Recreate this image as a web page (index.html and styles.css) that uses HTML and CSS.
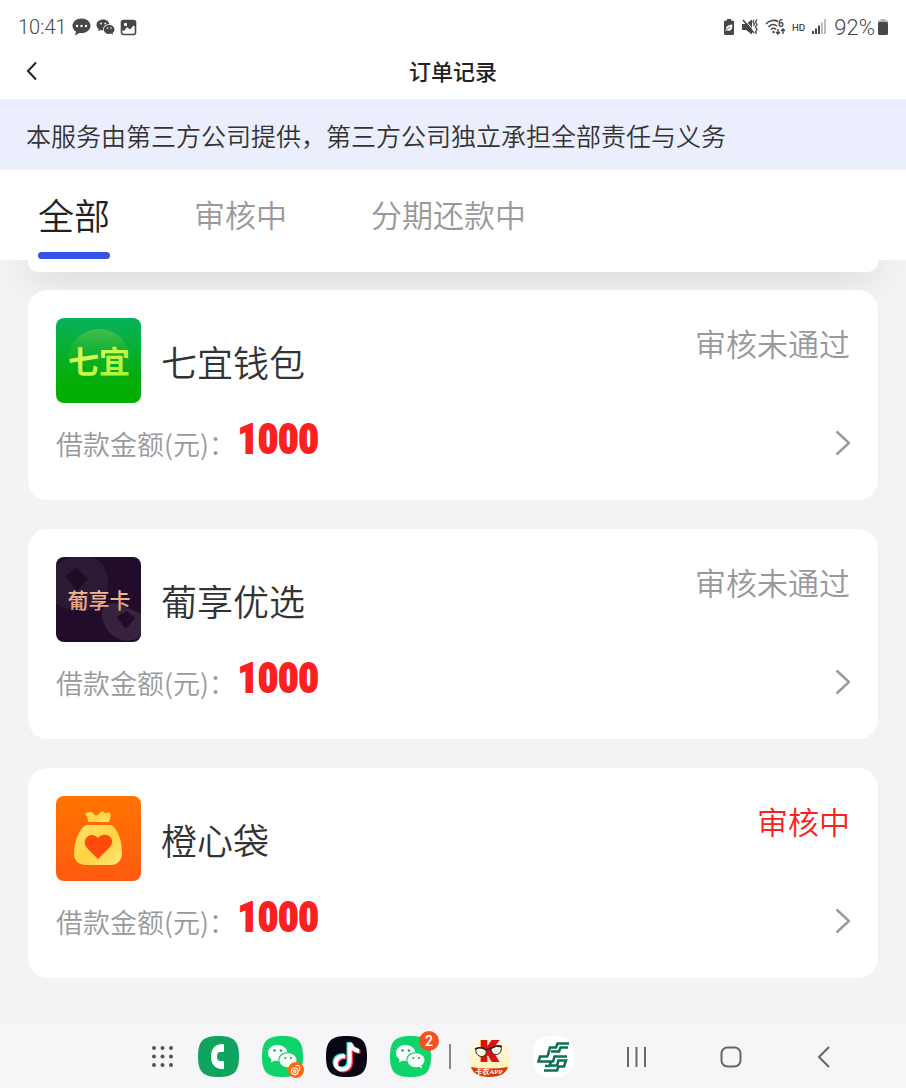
FILE: index.html
```html
<!DOCTYPE html>
<html lang="zh-CN">
<head>
  <meta charset="UTF-8">
  <meta name="viewport" content="width=device-width, initial-scale=1.0">
  <title>订单记录</title>
  <link rel="stylesheet" href="styles.css">
</head>
<body>

  <header class="top">
    <div class="status-bar">
      <div class="status-left">
        <span class="clock">10:41</span>
        <svg width="19" height="18" viewBox="0 0 19 18">
          <path fill="#474747" d="M9.500 .5C4.500 .5.5 3.700.5 7.800c0 2.500 1.300 4.500 3.500 5.800L3 17.500l4.300-2.600c.7.200 1.500.2 2.200.2 5 0 9-3.200 9-7.300S14.500.5 9.500.5z"/>
          <g fill="#fff"><circle cx="5" cy="8" r="1.200"/><circle cx="9.500" cy="8" r="1.200"/><circle cx="14" cy="8" r="1.200"/></g>
        </svg>
        <svg width="19" height="18" viewBox="0 0 19 18">
          <path fill="#474747" d="M7 1.500C3.300 1.500.5 3.800.5 7c0 1.700.8 3 2.200 4l-.6 2.300 2.500-1.300c.9.300 1.700.4 2.600.4-.5-4 2.500-6.300 6.300-6.100C13 3.200 10.200 1.500 7 1.500z"/>
          <path fill="#474747" d="M13.200 6.900c-3 0-5.400 1.900-5.400 4.500s2.400 4.500 5.400 4.500c.6 0 1.300-.1 1.900-.3l2 1.100-.5-1.900c1.200-.8 1.900-2 1.900-3.400 0-2.600-2.300-4.500-5.300-4.500z"/>
          <g fill="#fff"><circle cx="5" cy="5.500" r=".9"/><circle cx="9.300" cy="5.500" r=".9"/><circle cx="11.500" cy="10" r=".8"/><circle cx="15" cy="10" r=".8"/></g>
        </svg>
        <svg width="17" height="17" viewBox="0 0 17 17">
          <rect x="1.500" y="1.500" width="14" height="14" rx="2" fill="none" stroke="#474747" stroke-width="1.600"/>
          <path fill="#474747" d="M1.500 2h14v6l-2-1.500-3.500 4-3-2.500-3 4-2.500-1z"/>
          <rect x="4" y="4" width="3" height="3" rx="1" fill="#fff"/>
        </svg>
      </div>
      <div class="status-right">
        <svg width="12" height="18" viewBox="0 0 12 18">
          <path fill="#474747" d="M4 1h4v1.500h1.500A1.500 1.500 0 0 1 11 4v11.500A1.500 1.500 0 0 1 9.500 17h-7A1.500 1.500 0 0 1 1 15.500V4a1.500 1.500 0 0 1 1.500-1.500H4z"/>
          <path fill="#fff" d="M9.300 6.500c.3 4-.8 6.300-3.800 6.300-.8 0-1.300-.2-1.700-.5l-.9.900-.6-.6 1-1C2.500 8.500 5 7 9.300 6.500z"/>
          <path stroke="#474747" stroke-width=".8" fill="none" d="M3.500 11.800 7 8.800"/>
        </svg>
        <svg width="16" height="18" viewBox="0 0 16 18">
          <path fill="#474747" d="M0 6h4l6-4.500v15L4 12H0z"/>
          <path stroke="#fff" stroke-width="1" d="M2.500 1.500l11 13"/>
          <path stroke="#474747" stroke-width="1.600" d="M1 2l11 13"/>
          <path stroke="#474747" stroke-width="1.300" fill="none" d="M12 2l-1 2 1.500 2-1 2M15 1.500l-1.500 2.500L15 6.500 13.500 9l1.500 2.500-1.500 2.500 1 2"/>
        </svg>
        <svg width="20" height="18" viewBox="0 0 20 18">
          <g fill="none" stroke="#474747" stroke-width="1.600">
            <path d="M1 6c3.500-4 8.500-4.500 12-2.500M3.500 9c2.500-3 6-3 8.500-1M6 11.500c1.500-1.600 3.500-1.600 5 0"/>
            <path stroke-width="1.400" d="M13 11v5M11 14l2 2 2-2M18 16v-5M16 13l2-2 2 2"/>
          </g>
          <circle cx="8.500" cy="14" r="1.200" fill="#474747"/>
          <text class="wifi-six" x="13" y="9">6</text>
        </svg>
        <span class="hd">HD</span>
        <svg width="15" height="16" viewBox="0 0 15 16">
          <g fill="#474747"><rect x="0" y="12" width="2" height="3"/><rect x="3" y="9.500" width="2" height="5.500"/><rect x="6" y="6.500" width="2" height="8.500"/></g>
          <g fill="#bdbdbd"><rect x="9" y="3.500" width="2" height="11.500"/><rect x="12" y="0" width="2" height="15"/></g>
        </svg>
        <span class="battery-text">92%</span>
        <svg width="12" height="16" viewBox="0 0 12 16">
          <path fill="#b5b5b5" d="M3.500 0h5v1.500H11V4H1V1.500h2.500z"/>
          <rect x="1" y="3" width="10" height="13" rx="1.500" fill="#474747"/>
        </svg>
      </div>
    </div>

    <div class="title-bar">
      <button class="back" type="button" aria-label="返回">
        <svg width="12" height="20" viewBox="0 0 12 20"><path d="M10 1.500 2 10l8 8.500" fill="none" stroke="#222" stroke-width="2"/></svg>
      </button>
      <h1>订单记录</h1>
    </div>

    <p class="notice">本服务由第三方公司提供，第三方公司独立承担全部责任与义务</p>

    <nav class="tabs">
      <button class="tab active" type="button">全部</button>
      <button class="tab" type="button">审核中</button>
      <button class="tab" type="button">分期还款中</button>
    </nav>
  </header>

  <main class="orders">
    <div class="scrolled-card"></div>

    <article class="card">
      <div class="card-head">
        <svg class="logo" viewBox="0 0 85 85">
          <defs>
            <linearGradient id="green" x1="0" y1="0" x2="0" y2="1"><stop offset="0" stop-color="#07b25c"/><stop offset=".75" stop-color="#04ad08"/><stop offset="1" stop-color="#02ad00"/></linearGradient>
            <linearGradient id="shine" x1="0" y1="0" x2="0" y2="1"><stop offset="0" stop-color="#46bd50"/><stop offset=".7" stop-color="#08ad18" stop-opacity="0"/></linearGradient>
            <linearGradient id="lime" x1="0" y1="0" x2="1" y2="1"><stop offset="0" stop-color="#f5ff68"/><stop offset="1" stop-color="#a5f22b"/></linearGradient>
          </defs>
          <rect width="85" height="85" fill="url(#green)"/>
          <circle cx="43" cy="42" r="31" fill="url(#shine)"/>
          <text class="logo-qiyi" x="43" y="55">七宜</text>
        </svg>
        <h2>七宜钱包</h2>
        <span class="state">审核未通过</span>
      </div>
      <div class="card-foot">
        <span class="label">借款金额(元)：</span>
        <strong class="amount">1000</strong>
        <a class="more" href="#" aria-label="查看详情"><svg width="16" height="26" viewBox="0 0 16 26"><path d="M2.500 1.500 15 13 2.500 24.500" fill="none" stroke="#999" stroke-width="2.400"/></svg></a>
      </div>
    </article>

    <article class="card">
      <div class="card-head">
        <svg class="logo" viewBox="0 0 85 85">
          <defs><linearGradient id="gold" x1="0" y1="0" x2="0" y2="1"><stop offset="0" stop-color="#f8c49b"/><stop offset="1" stop-color="#e19d7c"/></linearGradient></defs>
          <rect width="85" height="85" fill="#210d2b"/>
          <path fill="#2c1935" d="M0 9C8 1 17-3 28-2c14 1 24 12 24 27 0 17-10 29-26 29-11 0-20-3-26-8z"/>
          <path fill="#200b25" d="M9 19 20 11l12 11-11 12z"/>
          <path fill="#38233e" d="M46 54c3-8 12-10 22-5l17 8v22c-7 6-18 6-26 1-9-6-14-16-13-26z"/>
          <path fill="#210d2b" d="M60 60 71 54l8 7-9 11z"/>
          <text class="logo-puxiang" x="43" y="51">葡享卡</text>
        </svg>
        <h2>葡享优选</h2>
        <span class="state">审核未通过</span>
      </div>
      <div class="card-foot">
        <span class="label">借款金额(元)：</span>
        <strong class="amount">1000</strong>
        <a class="more" href="#" aria-label="查看详情"><svg width="16" height="26" viewBox="0 0 16 26"><path d="M2.500 1.500 15 13 2.500 24.500" fill="none" stroke="#999" stroke-width="2.400"/></svg></a>
      </div>
    </article>

    <article class="card">
      <div class="card-head">
        <svg class="logo" viewBox="0 0 85 85">
          <defs>
            <linearGradient id="orange" x1="0" y1="0" x2="0" y2="1"><stop offset="0" stop-color="#ff7500"/><stop offset="1" stop-color="#ff5a10"/></linearGradient>
            <linearGradient id="bag" x1="0" y1="0" x2="1" y2="1"><stop offset="0" stop-color="#ffe36a"/><stop offset=".55" stop-color="#ffd342"/><stop offset="1" stop-color="#ffe97c"/></linearGradient>
          </defs>
          <rect width="85" height="85" fill="url(#orange)"/>
          <path fill="url(#bag)" d="M32 26c0-4-1-6-3-8 3-2 6-3 8-1 2 3 4 3 6 1 2-3 4-3 6-1 2 0 3-1 5 0 2 4-1 6-1 9z"/>
          <path fill="url(#bag)" d="M30 29h25c7 4 11 16 11 27 0 8-4 13-11 13H30c-7 0-12-4-12-11 0-12 5-25 12-29z"/>
          <path fill="#ff4b09" d="M42 63 31 52c-7-9 4-18 11-10 7-8 19 0 12 9z"/>
        </svg>
        <h2>橙心袋</h2>
        <span class="state pending">审核中</span>
      </div>
      <div class="card-foot">
        <span class="label">借款金额(元)：</span>
        <strong class="amount">1000</strong>
        <a class="more" href="#" aria-label="查看详情"><svg width="16" height="26" viewBox="0 0 16 26"><path d="M2.500 1.500 15 13 2.500 24.500" fill="none" stroke="#999" stroke-width="2.400"/></svg></a>
      </div>
    </article>
  </main>

  <footer class="dock">
    <button class="all-apps" type="button" aria-label="应用">
      <svg width="25" height="25" viewBox="0 0 25 25">
        <g fill="#555"><circle cx="4" cy="4" r="2"/><circle cx="12.500" cy="4" r="2"/><circle cx="21" cy="4" r="2"/><circle cx="4" cy="12.500" r="2"/><circle cx="12.500" cy="12.500" r="2"/><circle cx="21" cy="12.500" r="2"/><circle cx="4" cy="21" r="2"/><circle cx="12.500" cy="21" r="2"/><circle cx="21" cy="21" r="2"/></g>
      </svg>
    </button>
    <button class="app" type="button" aria-label="电话">
      <svg width="41" height="41" viewBox="0 0 41 41">
        <path fill="#11a461" d="M20.500 0C36 0 41 5 41 20.500S36 41 20.500 41 0 36 0 20.500 5 0 20.500 0z"/>
        <path fill="#fff" d="M24 8h1q1 0 1 1v6q0 1-1 1h-2.500c-2.500 0-3.500 2-3.500 4.500s1 4.500 3.500 4.500H25q1 0 1 1v6q0 1-1 1h-1c-7 0-11-5-11-12.500S17 8 24 8z"/>
      </svg>
    </button>
    <button class="app" type="button" aria-label="微信分身">
      <svg width="41" height="41" viewBox="0 0 41 41">
        <path fill="#0ed469" d="M20.500 0C36 0 41 5 41 20.500S36 41 20.500 41 0 36 0 20.500 5 0 20.500 0z"/>
        <path fill="#fff" d="M15.500 9C10 9 6 12.500 6 17c0 2.700 1.400 4.800 3.600 6.300L9 26.500l3.500-2c1.300.4 2.500.5 4 .5-1-5 3.500-9 9-8.700C24.600 12 20.500 9 15.500 9z"/>
        <path fill="#fff" d="M26 17.200c-4.800 0-8.500 3-8.500 7s3.700 7 8.500 7c1 0 2-.2 3-.5l3 1.700-.8-2.800c2-1.300 3.300-3.200 3.300-5.400 0-4-3.700-7-8.500-7z"/>
        <g fill="#0aa757"><circle cx="12.500" cy="14.500" r="1.300"/><circle cx="19" cy="14.500" r="1.300"/><circle cx="23.300" cy="22" r="1.100"/><circle cx="29" cy="22" r="1.100"/></g>
      </svg>
      <svg class="clone" width="16" height="16" viewBox="0 0 16 16">
        <circle cx="8" cy="8" r="8" fill="#ff6b0b"/>
        <g fill="none" stroke="#fff" stroke-width="1.100"><circle cx="6.800" cy="9.300" r="3.300"/><circle cx="6.800" cy="9.300" r="1.200"/><path d="M7.500 4c3-1.500 5.500 1 4 4.500"/></g>
      </svg>
    </button>
    <button class="app" type="button" aria-label="抖音">
      <svg width="41" height="41" viewBox="0 0 41 41">
        <path fill="#090713" d="M20.500 0C36 0 41 5 41 20.500S36 41 20.500 41 0 36 0 20.500 5 0 20.500 0z"/>
        <g fill="none" stroke-width="4">
          <path stroke="#35e6e6" d="M22.500 6v19c0 10-14 9.500-14 1.500 0-5 4.500-8 9.500-7M23 6c1 5 4 7.500 9 8"/>
          <path stroke="#fa2c59" d="M25 8v19c0 10-14 9.500-14 1.500 0-5 4.500-8 9.500-7M25.500 8c1 5 4 7.500 9 8"/>
          <path stroke="#fff" d="M23.700 7v19c0 10-14 9.500-14 1.500 0-5 4.500-8 9.500-7M24.200 7c1 5 4 7.500 9 8"/>
        </g>
      </svg>
    </button>
    <button class="app" type="button" aria-label="微信">
      <svg width="41" height="41" viewBox="0 0 41 41">
        <path fill="#0ed469" d="M20.500 0C36 0 41 5 41 20.500S36 41 20.500 41 0 36 0 20.500 5 0 20.500 0z"/>
        <path fill="#fff" d="M15.500 9C10 9 6 12.500 6 17c0 2.700 1.400 4.800 3.600 6.300L9 26.500l3.500-2c1.300.4 2.500.5 4 .5-1-5 3.500-9 9-8.700C24.600 12 20.500 9 15.500 9z"/>
        <path fill="#fff" d="M26 17.200c-4.800 0-8.500 3-8.500 7s3.700 7 8.500 7c1 0 2-.2 3-.5l3 1.700-.8-2.800c2-1.300 3.300-3.200 3.300-5.400 0-4-3.700-7-8.500-7z"/>
        <g fill="#0aa757"><circle cx="12.500" cy="14.500" r="1.300"/><circle cx="19" cy="14.500" r="1.300"/><circle cx="23.300" cy="22" r="1.100"/><circle cx="29" cy="22" r="1.100"/></g>
      </svg>
      <span class="badge">2</span>
    </button>
    <span class="divider"></span>
    <button class="app" type="button" aria-label="卡农">
      <svg width="41" height="41" viewBox="0 0 41 41">
        <defs><clipPath id="round"><path d="M20.500 0C36 0 41 5 41 20.500S36 41 20.500 41 0 36 0 20.500 5 0 20.500 0z"/></clipPath>
        <linearGradient id="cream" x1="0" y1="0" x2="0" y2="1"><stop offset="0" stop-color="#fbf8f3"/><stop offset="1" stop-color="#fff3a8"/></linearGradient></defs>
        <g clip-path="url(#round)">
          <rect width="41" height="41" fill="url(#cream)"/>
          <path fill="#d8360f" d="M2 31q18.500 3 37 0-3 10-18.500 10T2 31z"/>
        </g>
        <text class="logo-k" x="20" y="25">K</text>
        <g fill="#fffce0" stroke="#222">
          <path d="M7 13q5-3 10 .5c1 4-1 7-4.500 7S6 17 7 13z"/>
          <path d="M22 12q6-3 10-1c1 4-1 7-4.500 7.500S22 16 22 12z"/>
        </g>
        <path d="M6 13q6-3 11 1 3-2 5-1.500 6-4 11-2" fill="none" stroke="#222" stroke-width="1.500"/>
        <text class="logo-kanong" x="20" y="38">卡农APP</text>
      </svg>
    </button>
    <button class="app" type="button" aria-label="邮储银行">
      <svg width="41" height="41" viewBox="0 0 41 41">
        <path fill="#fff" d="M20.500 0C36 0 41 5 41 20.500S36 41 20.500 41 0 36 0 20.500 5 0 20.500 0z"/>
        <g fill="none" stroke="#0c7054" stroke-width="2.600">
          <path d="M36 7.500H24.500L23 11.500h-6L14.500 20.500"/>
          <path d="M35 11.500h-7.500L26 15.500h-8"/>
          <path d="M15 20.500H7L5.500 25.500H20l1.500-5H34"/>
          <path d="M11 34.500h13l1.500-4H31l2-6h-7.500L24 29.500h-6"/>
          <path d="M18 25.500 16.500 30H12"/>
        </g>
      </svg>
    </button>
    <div class="system-nav">
      <button type="button" aria-label="最近任务"><svg width="22" height="22" viewBox="0 0 22 22"><path d="M2 1v20M10.500 1v20M19 1v20" stroke="#666" stroke-width="2"/></svg></button>
      <button type="button" aria-label="主页"><svg width="22" height="22" viewBox="0 0 22 22"><rect x="1.500" y="1.500" width="19" height="19" rx="6" fill="none" stroke="#666" stroke-width="2"/></svg></button>
      <button type="button" aria-label="返回上一页"><svg width="14" height="22" viewBox="0 0 14 22"><path d="M12 1 2 11l10 10" fill="none" stroke="#666" stroke-width="2"/></svg></button>
    </div>
  </footer>

</body>
</html>
```
FILE: styles.css
```css
* {
  box-sizing: border-box;
}
body {
  margin: 0;
  min-height: 100vh;
  display: flex;
  flex-direction: column;
  font-family: "Noto Sans CJK SC", sans-serif;
  font-weight: 350;
  background-color: #f3f3f3;
  color: #333333;
}
h1, h2, p {
  margin: 0;
}
button {
  padding: 0;
  border: none;
  background: none;
  font-family: inherit;
  font-weight: inherit;
  color: inherit;
  cursor: pointer;
}
svg {
  display: block;
}

.top {
  position: relative;
  z-index: 1;
  background-color: #ffffff;
}
.status-bar {
  display: flex;
  justify-content: space-between;
  align-items: center;
  height: 44px;
  padding: 10px 17px 0 18px;
  font-family: Roboto, sans-serif;
  font-size: 20px;
  color: #474747;
}
.status-left, .status-right {
  display: flex;
  align-items: center;
}
.status-left {
  gap: 5px;
}
.status-right {
  gap: 7px;
}
.hd {
  font-family: Inter, sans-serif;
  font-size: 9px;
  font-weight: 600;
}
.wifi-six {
  font-family: Roboto, sans-serif;
  font-size: 10px;
  font-weight: 700;
  fill: #474747;
}
.battery-text {
  margin-right: -5px;
  font-size: 22px;
}

.title-bar {
  display: flex;
  align-items: center;
  height: 55px;
  padding: 0 26px 2px;
}
.title-bar h1 {
  flex: 1;
  padding-right: 12px;
  font-size: 22px;
  font-weight: 500;
  line-height: 53px;
  text-align: center;
  color: #222222;
}

.notice {
  padding: 2px 26px 0;
  font-size: 25px;
  line-height: 69px;
  background-color: #ebeefc;
}

.tabs {
  display: flex;
  gap: 84px;
  height: 90px;
  padding: 0 38px;
}
.tab {
  padding-top: 2px;
  border-bottom: 5px solid transparent;
  font-size: 31px;
  color: #999999;
}
.tab.active {
  position: relative;
  font-size: 36px;
  color: #222222;
}
.tab.active::after {
  content: "";
  position: absolute;
  left: 0;
  right: 0;
  bottom: -4px;
  height: 7px;
  border-radius: 4px;
  background-color: #3551e6;
}

.orders {
  flex: 1;
  padding: 0 28px 28px;
}
.scrolled-card {
  height: 12px;
  margin-bottom: 18px;
  border-radius: 0 0 10px 10px;
  background-color: #ffffff;
  box-shadow: 0 0 36px rgba(0, 0, 0, 0.25);
}
.card {
  padding: 28px 28px 32px;
  margin-bottom: 29px;
  border-radius: 20px;
  background-color: #ffffff;
}
.card:last-child {
  margin-bottom: 0;
}
.card-head {
  display: flex;
  align-items: flex-start;
}
.logo {
  flex: none;
  width: 85px;
  height: 85px;
  margin-right: 20px;
  border-radius: 8px;
}
.logo-qiyi {
  font-size: 31px;
  font-weight: 700;
  text-anchor: middle;
  fill: url(#lime);
}
.logo-puxiang {
  font-size: 21px;
  font-weight: 500;
  text-anchor: middle;
  fill: url(#gold);
}
.card h2 {
  font-size: 36px;
  font-weight: 350;
  line-height: 86px;
  height: 85px;
}
.state {
  margin-left: auto;
  font-size: 31px;
  line-height: 50px;
  color: #999999;
}
.state.pending {
  color: #fc2020;
}
.card-foot {
  display: flex;
  align-items: center;
  height: 50px;
  margin-top: 15px;
}
.label {
  font-size: 27px;
  color: #999999;
}
.amount {
  align-self: flex-start;
  margin-left: 2px;
  font-family: "Liberation Sans Narrow", "Roboto Condensed", Roboto, sans-serif;
  font-size: 40px;
  font-weight: 700;
  line-height: 43px;
  color: #fc2020;
  -webkit-text-stroke: 2px #fc2020;
}
.more {
  margin-left: auto;
}

.dock {
  display: flex;
  align-items: center;
  gap: 23px;
  height: 64px;
  padding: 1px 35px 0 150px;
  background-color: #f6f6f9;
}
.app {
  position: relative;
}
.clone {
  position: absolute;
  right: -1px;
  bottom: -1px;
}
.badge {
  position: absolute;
  top: -5px;
  right: -8px;
  width: 20px;
  height: 20px;
  border-radius: 50%;
  font-family: Roboto, sans-serif;
  font-size: 14px;
  font-weight: 500;
  line-height: 20px;
  text-align: center;
  color: #ffffff;
  background-color: #f15322;
}
.divider {
  width: 2px;
  height: 25px;
  margin: 0 -5px;
  background-color: #888888;
}
.logo-k {
  font-family: Roboto, sans-serif;
  font-size: 27px;
  font-weight: 900;
  text-anchor: middle;
  fill: #dc1010;
  stroke: #dc1010;
  stroke-width: 2px;
}
.logo-kanong {
  font-family: "Liberation Serif", "Noto Sans CJK SC", serif;
  font-size: 7px;
  font-weight: 700;
  text-anchor: middle;
  fill: #ffffff;
}
.system-nav {
  flex: 1;
  display: flex;
  margin-left: -7px;
}
.system-nav button {
  flex: 1;
  display: flex;
  justify-content: center;
}
```
